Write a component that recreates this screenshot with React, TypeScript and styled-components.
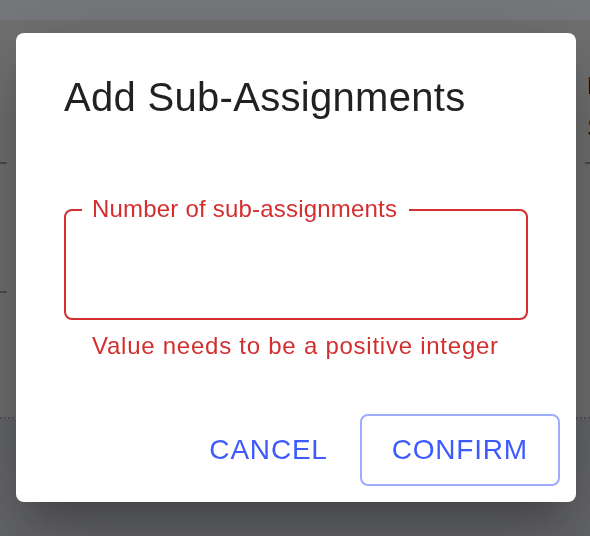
import styled, { createGlobalStyle } from 'styled-components';

const GlobalStyle = createGlobalStyle`
    html, body {
        margin: 0;
        padding: 0;
        width: 100%;
        height: 100%;
        overflow: hidden;
    }
    body {
        font-family: 'Liberation Sans', Arial, sans-serif;
        background: #cdcfd7;
    }
    * {
        box-sizing: border-box;
    }
`;

const App = () => {
    return (
        <>
            <GlobalStyle />
            <Page>
                <TopBar />
                <Main>
                    <LeftRail>
                        <RailRow $height={144} />
                        <RailRow $height={129} />
                    </LeftRail>
                    <Gap />
                    <RightPanel>
                        <PanelHead>
                            <PanelLabel>Due date</PanelLabel>
                            <PanelValue>Sep 30</PanelValue>
                        </PanelHead>
                    </RightPanel>
                </Main>
                <Footer />
            </Page>
            <Backdrop>
                <Dialog role="dialog">
                    <Title>Add Sub-Assignments</Title>
                    <Content>
                        <Field>
                            <FieldLabel>Number of sub-assignments</FieldLabel>
                            <FieldInput type="text" aria-invalid="true" />
                        </Field>
                        <HelperText>Value needs to be a positive integer</HelperText>
                    </Content>
                    <Actions>
                        <TextButton>Cancel</TextButton>
                        <OutlinedButton>Confirm</OutlinedButton>
                    </Actions>
                </Dialog>
            </Backdrop>
        </>
    );
};

// page underneath the modal (dimmed by the backdrop)
const Page = styled.div`
    display: flex;
    flex-direction: column;
    height: 100vh;
    background: #cdcfd7;
`;

const TopBar = styled.div`
    height: 20px;
    flex-shrink: 0;
    background: #eef0f6;
`;

const Main = styled.div`
    display: grid;
    grid-template-columns: 7px 1fr 5px;
    height: 399px;
    flex-shrink: 0;
    background: #e0e0e0;
    border-bottom: 2px dotted #aaaaaa;
`;

const LeftRail = styled.div`
    display: flex;
    flex-direction: column;
`;

const RailRow = styled.div<{ $height: number }>`
    height: ${({ $height }) => $height}px;
    border-bottom: 2px solid #9a9a9a;
`;

const Gap = styled.div``;

const RightPanel = styled.div`
    overflow: hidden;
`;

const PanelHead = styled.div`
    height: 144px;
    border-bottom: 2px solid #9a9a9a;
    padding: 50px 0 0 2px;
    white-space: nowrap;
    color: #222;
`;

const PanelLabel = styled.div`
    font-size: 24px;
    line-height: 32px;
`;

const PanelValue = styled.div`
    font-size: 28px;
    line-height: 44px;
    margin-top: 4px;
`;

const Footer = styled.div`
    flex: 1;
`;

// modal
const Backdrop = styled.div`
    position: fixed;
    inset: 0;
    background: rgba(0, 0, 0, 0.5);
    display: flex;
    align-items: center;
    justify-content: center;
`;

const Dialog = styled.div`
    width: 560px;
    display: flex;
    flex-direction: column;
    background: #fff;
    border-radius: 8px;
    margin: 0 0 1px 2px;
    box-shadow:
        0 22px 30px -14px rgba(0, 0, 0, 0.2),
        0 48px 76px 6px rgba(0, 0, 0, 0.14),
        0 18px 92px 16px rgba(0, 0, 0, 0.12);
`;

const Title = styled.h2`
    margin: 0;
    padding: 32px 48px;
    font-size: 40px;
    line-height: 64px;
    font-weight: 400;
    letter-spacing: 0.3px;
    color: rgba(0, 0, 0, 0.87);
`;

const Content = styled.div`
    padding: 48px 48px 32px;
`;

const Field = styled.div`
    position: relative;
    height: 111px;
    border: 2px solid #d32f2f;
    border-radius: 8px;
`;

// notched label sitting on the top border
const FieldLabel = styled.label`
    position: absolute;
    top: -14px;
    left: 16px;
    padding: 0 12px 0 10px;
    background: #fff;
    font-size: 24px;
    line-height: 24px;
    letter-spacing: 0.2px;
    color: #d32f2f;
    white-space: nowrap;
`;

const FieldInput = styled.input`
    width: 100%;
    height: 100%;
    border: none;
    outline: none;
    background: transparent;
    padding: 0 26px;
    font-family: inherit;
    font-size: 32px;
    color: rgba(0, 0, 0, 0.87);
`;

const HelperText = styled.p`
    margin: 6px 28px 0;
    font-size: 24px;
    line-height: 40px;
    letter-spacing: 0.75px;
    color: #d32f2f;
`;

const Actions = styled.div`
    display: flex;
    justify-content: flex-end;
    align-items: center;
    gap: 16px;
    padding: 16px;
`;

const TextButton = styled.button`
    height: 72px;
    padding: 12px 16px;
    border: none;
    border-radius: 8px;
    background: transparent;
    font-family: inherit;
    font-size: 28px;
    line-height: 48px;
    letter-spacing: 0.8px;
    text-transform: uppercase;
    color: #3d5afe;
    cursor: pointer;
`;

const OutlinedButton = styled(TextButton)`
    padding: 10px 30px;
    border: 2px solid rgba(61, 90, 254, 0.5);
`;

export default App;
